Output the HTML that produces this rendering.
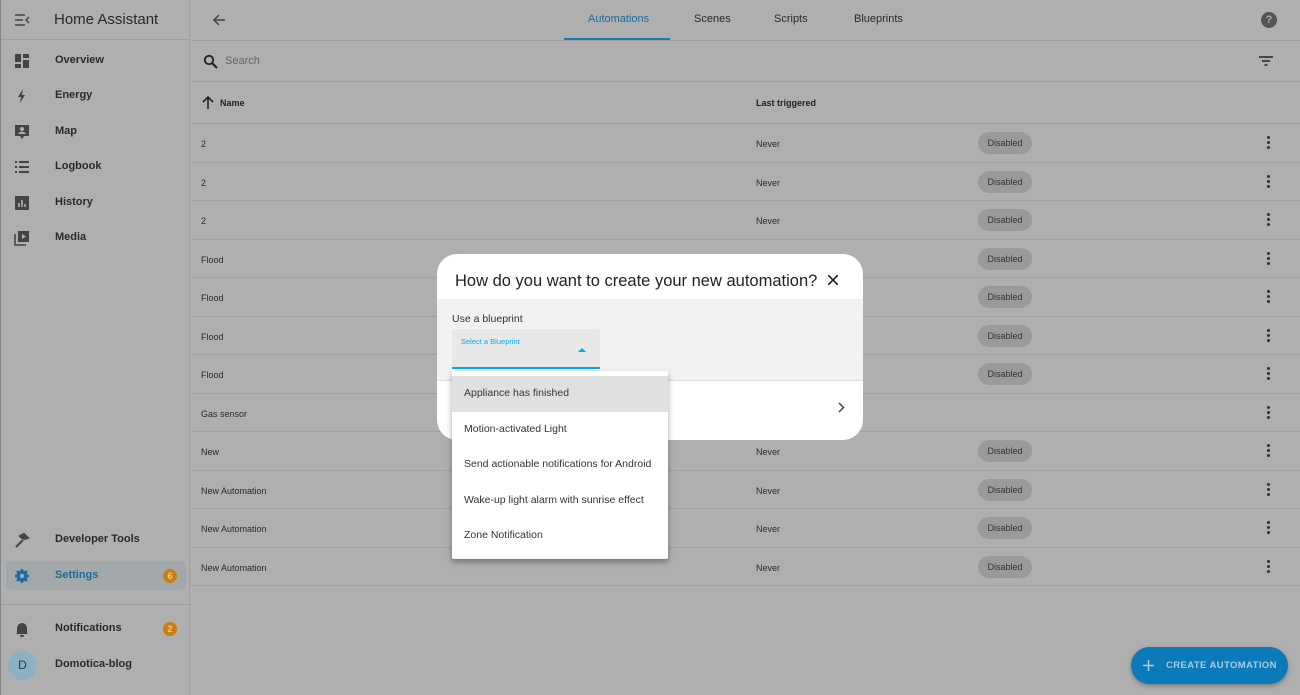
<!DOCTYPE html>
<html><head><meta charset="utf-8"><style>
*{box-sizing:border-box;margin:0;padding:0}
body{width:1300px;height:695px;overflow:hidden;background:#afafaf;font-family:"Liberation Sans",sans-serif;color:#222;position:relative}
.sb{position:absolute;left:0;top:0;width:190px;height:695px;border-right:1px solid #9e9e9e;border-left:1px solid #888}
.sbh{height:40px;border-bottom:1px solid #9e9e9e;position:relative}
.sbh span{position:absolute;left:53px;top:11px;font-size:15px;color:#2a2a2a}
.it{position:absolute;left:0;width:190px;height:30px;font-size:11px;font-weight:bold;color:#2a2a2a}
.it span{position:absolute;left:54px;top:8px}
.it svg{position:absolute;left:13px;top:7px}
.main{position:absolute;left:191px;top:0;right:0;height:695px}
.top{height:41px;border-bottom:1px solid #9e9e9e;position:relative}
.tab{position:absolute;top:13px;font-size:11px;color:#2a2a2a}
.srch{height:41px;border-bottom:1px solid #9e9e9e;position:relative}
.hdr{height:42px;border-bottom:1px solid #9e9e9e;position:relative;font-size:9px;font-weight:bold}
.row{height:38.5px;border-bottom:1px solid #a0a0a0;position:relative;font-size:9px;color:#2a2a2a}
.row .n{position:absolute;left:10px;top:15px}
.row .t{position:absolute;left:565px;top:15px}
.chip{position:absolute;left:787px;top:8px;width:54px;height:22px;border-radius:11px;background:#9a9a9a;font-size:9px;text-align:center;line-height:22px;color:#333}
.dots{position:absolute;left:1076px;top:12px;width:3px}
.dots i{display:block;width:3px;height:3px;border-radius:50%;background:#333;margin-bottom:2px}
.badge{position:absolute;left:162px;top:8px;width:14px;height:14px;border-radius:50%;background:#c87e12;color:#e8c890;font-size:9px;text-align:center;line-height:14px}
.dlg{position:absolute;left:437px;top:254px;width:426px;height:186px;background:#fff;border-radius:20px;overflow:hidden}
.menu{position:absolute;left:452px;top:371px;width:216px;height:188px;background:#fff;box-shadow:0 3px 6px rgba(0,0,0,.35);border-radius:2px;padding-top:5px}
.menu div{height:35.5px;line-height:35.5px;padding-left:12px;font-size:10.5px;color:#333}
.fab{position:absolute;left:1131px;top:647px;width:157px;height:37px;border-radius:19px;background:#0a7ab8;box-shadow:0 2px 5px rgba(0,0,0,.3);color:#a9cde3;font-size:9.5px;font-weight:bold;letter-spacing:.4px}
</style></head><body>
<div class="sb">
 <div class="sbh">
  <svg style="position:absolute;left:14px;top:14px" width="15" height="12" viewBox="0 0 15 12"><path d="M0 1h10M0 6h8M0 11h10M14 3l-3 3 3 3" stroke="#444" stroke-width="1.5" fill="none"/></svg>
  <span>Home Assistant</span></div>
 <div class="it" style="top:46px"><svg width="16" height="16" viewBox="0 0 16 16"><path d="M1 1h6v8H1zM9 1h6v4H9zM9 7h6v8H9zM1 11h6v4H1z" fill="#444"/></svg><span>Overview</span></div>
 <div class="it" style="top:81px"><svg width="16" height="16" viewBox="0 0 16 16"><path d="M9 1L4 9h3l-1 6 5-8H8z" fill="#444"/></svg><span>Energy</span></div>
 <div class="it" style="top:117px"><svg width="16" height="16" viewBox="0 0 16 16"><path d="M1 1h14v11h-5l-2 3-2-3H1z" fill="#444"/><circle cx="8" cy="5" r="2" fill="#afafaf"/><path d="M4 10c1-3 7-3 8 0z" fill="#afafaf"/></svg><span>Map</span></div>
 <div class="it" style="top:152px"><svg width="16" height="16" viewBox="0 0 16 16"><path d="M1 3h2M1 8h2M1 13h2M5 3h10M5 8h10M5 13h10" stroke="#444" stroke-width="2"/></svg><span>Logbook</span></div>
 <div class="it" style="top:188px"><svg width="16" height="16" viewBox="0 0 16 16"><rect x="1" y="1" width="14" height="14" fill="#444"/><path d="M5 12V8M8 12V5M11 12V9" stroke="#afafaf" stroke-width="1.6"/></svg><span>History</span></div>
 <div class="it" style="top:223px"><svg width="16" height="16" viewBox="0 0 16 16"><path d="M1 4v11h11" stroke="#444" stroke-width="1.6" fill="none"/><rect x="4" y="1" width="11" height="11" fill="#444"/><path d="M8 4l4 2.5L8 9z" fill="#afafaf"/></svg><span>Media</span></div>
 <div class="it" style="top:525px"><svg width="16" height="16" viewBox="0 0 16 16"><path d="M2 15l7-7M6 4l4-2 4 4-3 1-3-1z" stroke="#444" stroke-width="2" fill="#444"/></svg><span>Developer Tools</span></div>
 <div style="position:absolute;left:5px;top:561px;width:180px;height:29px;border-radius:4px;background:#a3a8ab"></div>
 <div class="it" style="top:561px;color:#1b6c9c"><svg width="16" height="16" viewBox="0 0 16 16"><circle cx="8" cy="8" r="5.5" fill="#1a6d9e"/><path d="M8 1v14M1 8h14M3 3l10 10M13 3L3 13" stroke="#1a6d9e" stroke-width="2.5"/><circle cx="8" cy="8" r="2.2" fill="#a3a8ab"/></svg><span>Settings</span><div class="badge">6</div></div>
 <div style="position:absolute;left:0;top:604px;width:190px;border-top:1px solid #9e9e9e"></div>
 <div class="it" style="top:614px"><svg width="16" height="16" viewBox="0 0 16 16"><path d="M3 12V7a5 5 0 0110 0v5l1 1H2zM6 14h4a2 2 0 01-4 0z" fill="#444"/></svg><span>Notifications</span><div class="badge">2</div></div>
 <div style="position:absolute;left:7px;top:651px;width:29px;height:29px;border-radius:50%;background:#8cb1c6;font-size:12px;text-align:center;line-height:29px;color:#333">D</div>
 <div class="it" style="top:650px"><span>Domotica-blog</span></div>
</div>
<div class="main">
 <div class="top">
  <svg style="position:absolute;left:21px;top:13px" width="14" height="14" viewBox="0 0 14 14"><path d="M13 7H2M7 2L2 7l5 5" stroke="#444" stroke-width="1.5" fill="none"/></svg>
  <div class="tab" style="left:397px;color:#1b6c9c">Automations</div>
  <div style="position:absolute;left:373px;top:38px;width:106px;height:2px;background:#1b78ad"></div>
  <div class="tab" style="left:503px">Scenes</div>
  <div class="tab" style="left:583px">Scripts</div>
  <div class="tab" style="left:663px">Blueprints</div>
  <div style="position:absolute;left:1070px;top:12px;width:16px;height:16px;border-radius:50%;background:#555;color:#aaa;font-size:11px;font-weight:bold;text-align:center;line-height:16px">?</div>
 </div>
 <div class="srch">
  <svg style="position:absolute;left:12px;top:13px" width="15" height="15" viewBox="0 0 15 15"><circle cx="6" cy="6" r="4.2" stroke="#222" stroke-width="1.8" fill="none"/><path d="M9 9l5 5" stroke="#222" stroke-width="2"/></svg>
  <span style="position:absolute;left:34px;top:14px;font-size:11px;color:#666">Search</span>
  <svg style="position:absolute;left:1068px;top:15px" width="14" height="10" viewBox="0 0 14 10"><path d="M0 1h14M3 5h8M5.5 9h3" stroke="#222" stroke-width="1.6"/></svg>
 </div>
 <div class="hdr">
  <svg style="position:absolute;left:11px;top:14px" width="12" height="13" viewBox="0 0 12 13"><path d="M6 13V2M1 6l5-5 5 5" stroke="#222" stroke-width="1.6" fill="none"/></svg>
  <span style="position:absolute;left:29px;top:16px">Name</span>
  <span style="position:absolute;left:565px;top:16px">Last triggered</span>
 </div>
 <div class="row"><span class="n">2</span><span class="t">Never</span><div class="chip">Disabled</div><div class="dots"><i></i><i></i><i></i></div></div>
 <div class="row"><span class="n">2</span><span class="t">Never</span><div class="chip">Disabled</div><div class="dots"><i></i><i></i><i></i></div></div>
 <div class="row"><span class="n">2</span><span class="t">Never</span><div class="chip">Disabled</div><div class="dots"><i></i><i></i><i></i></div></div>
 <div class="row"><span class="n">Flood</span><div class="chip">Disabled</div><div class="dots"><i></i><i></i><i></i></div></div>
 <div class="row"><span class="n">Flood</span><div class="chip">Disabled</div><div class="dots"><i></i><i></i><i></i></div></div>
 <div class="row"><span class="n">Flood</span><div class="chip">Disabled</div><div class="dots"><i></i><i></i><i></i></div></div>
 <div class="row"><span class="n">Flood</span><div class="chip">Disabled</div><div class="dots"><i></i><i></i><i></i></div></div>
 <div class="row"><span class="n">Gas sensor</span><div class="dots"><i></i><i></i><i></i></div></div>
 <div class="row"><span class="n">New</span><span class="t">Never</span><div class="chip">Disabled</div><div class="dots"><i></i><i></i><i></i></div></div>
 <div class="row"><span class="n">New Automation</span><span class="t">Never</span><div class="chip">Disabled</div><div class="dots"><i></i><i></i><i></i></div></div>
 <div class="row"><span class="n">New Automation</span><span class="t">Never</span><div class="chip">Disabled</div><div class="dots"><i></i><i></i><i></i></div></div>
 <div class="row"><span class="n">New Automation</span><span class="t">Never</span><div class="chip">Disabled</div><div class="dots"><i></i><i></i><i></i></div></div>
</div>
<div class="dlg">
 <div style="position:absolute;left:18px;top:18px;font-size:16.5px;color:#222">How do you want to create your new automation?</div>
 <svg style="position:absolute;left:391px;top:21px" width="10" height="10" viewBox="0 0 10 10"><path d="M0 0l10 10M10 0L0 10" stroke="#222" stroke-width="1.6"/></svg>
 <div style="position:absolute;left:0;top:45px;width:426px;height:82px;background:#f2f2f2;border-bottom:1px solid #e0e0e0"></div>
 <div style="position:absolute;left:15px;top:59px;font-size:10.5px;color:#333">Use a blueprint</div>
 <div style="position:absolute;left:15px;top:75px;width:148px;height:40px;background:#e8e8e8;border-bottom:2px solid #03a9f4;border-radius:3px 3px 0 0">
  <span style="position:absolute;left:9px;top:8px;font-size:7.5px;color:#03a9f4">Select a Blueprint</span>
  <div style="position:absolute;left:126px;top:19px;width:0;height:0;border-left:4px solid transparent;border-right:4px solid transparent;border-bottom:4px solid #03a9f4"></div>
 </div>
 <svg style="position:absolute;left:401px;top:148px" width="7" height="11" viewBox="0 0 7 11"><path d="M1 1l4.5 4.5L1 10" stroke="#444" stroke-width="1.5" fill="none"/></svg>
</div>
<div class="menu">
 <div style="background:#e0e0e0">Appliance has finished</div>
 <div>Motion-activated Light</div>
 <div>Send actionable notifications for Android</div>
 <div>Wake-up light alarm with sunrise effect</div>
 <div>Zone Notification</div>
</div>
<div class="fab">
 <svg style="position:absolute;left:12px;top:13px" width="11" height="11" viewBox="0 0 11 11"><path d="M5.5 0v11M0 5.5h11" stroke="#a9cde3" stroke-width="1.5"/></svg>
 <span style="position:absolute;left:35px;top:13px">CREATE AUTOMATION</span>
</div>
</body></html>
